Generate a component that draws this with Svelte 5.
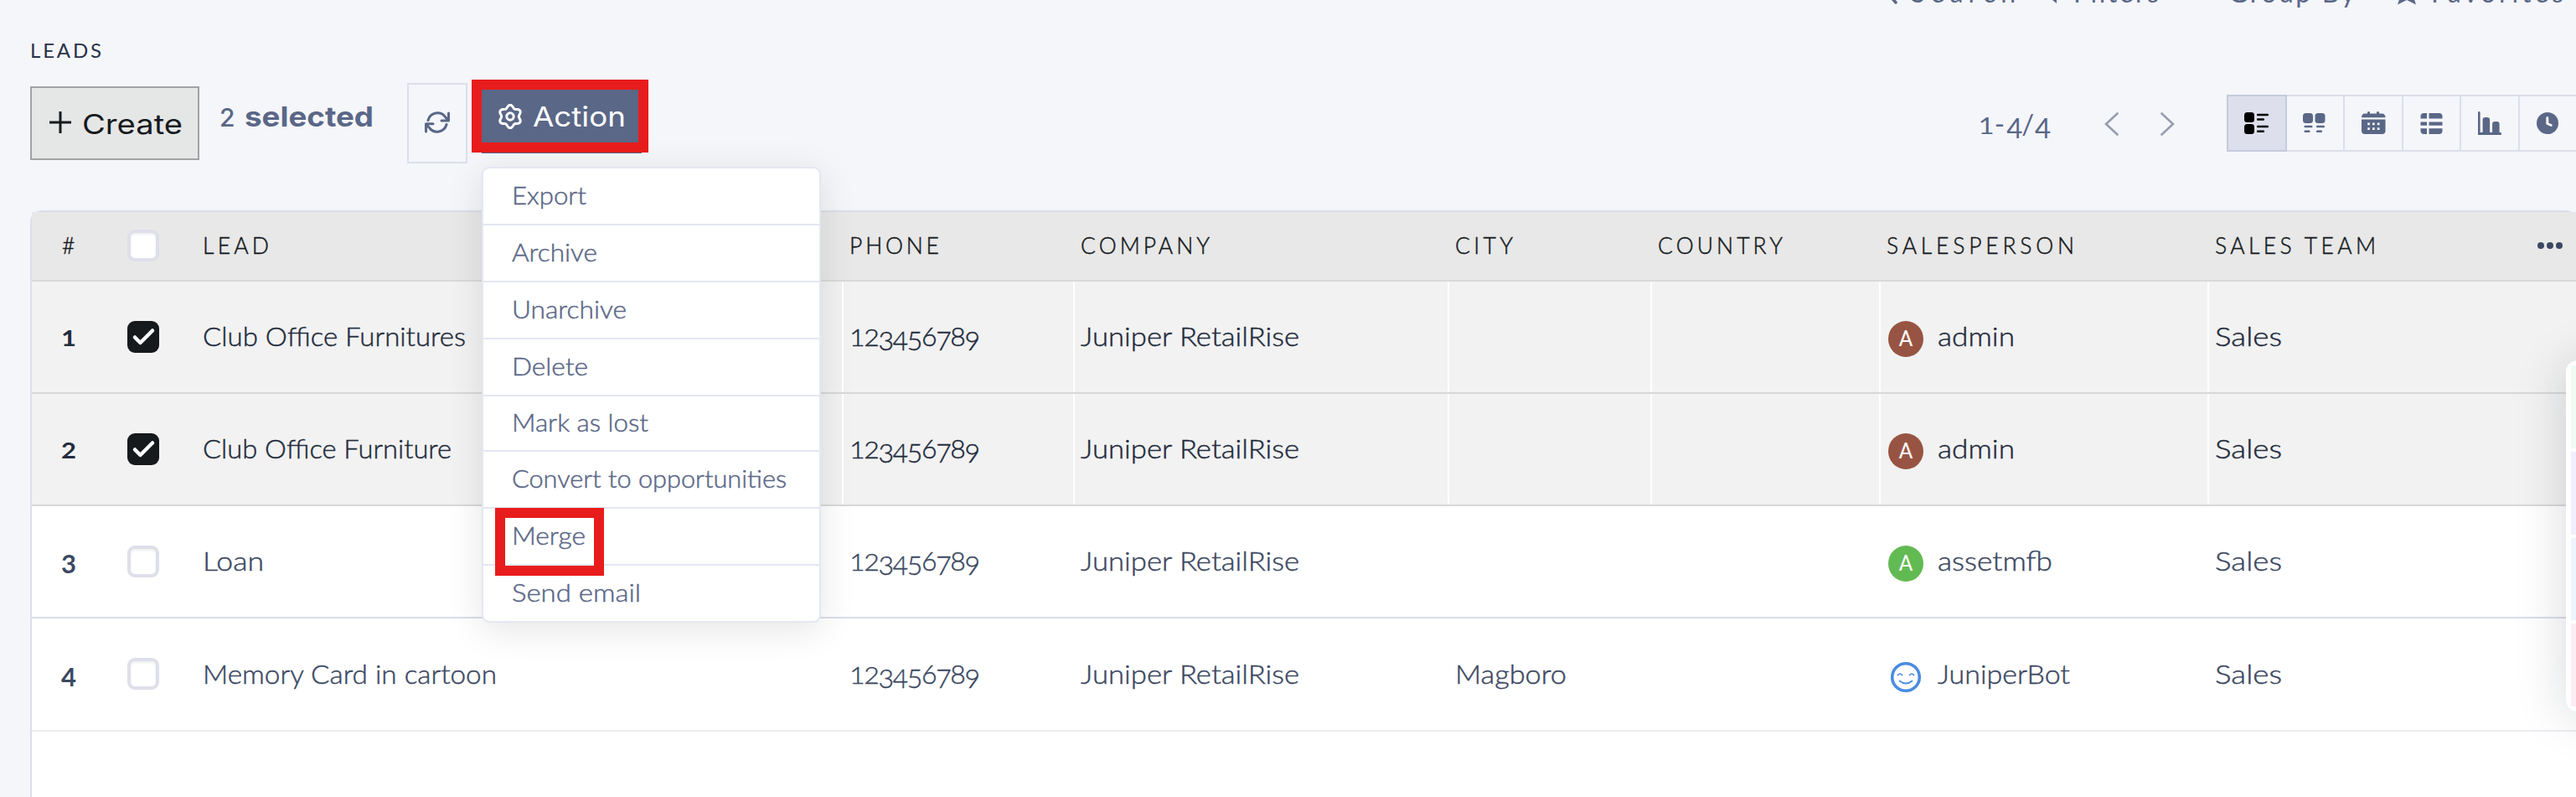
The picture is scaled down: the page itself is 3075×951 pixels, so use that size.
<script>
  const columns = [
    ['phone', 'PHONE', 106],
    ['company', 'COMPANY', 153],
    ['city', 'CITY', 68],
    ['country', 'COUNTRY', 148],
    ['person', 'SALESPERSON', 223],
    ['team', 'SALES TEAM', 191]
  ];

  const leads = [
    { name: 'Club Office Furnitures', w: 311, selected: true, city: '', person: 'admin', pw: 89, tone: 'brown' },
    { name: 'Club Office Furniture', w: 294, selected: true, city: '', person: 'admin', pw: 89, tone: 'brown' },
    { name: 'Loan', w: 70, selected: false, city: '', person: 'assetmfb', pw: 134, tone: 'green' },
    { name: 'Memory Card in cartoon', w: 348, selected: false, city: 'Magboro', person: 'JuniperBot', pw: 155, tone: 'bot' }
  ];

  const actions = [
    ['Export', 86], ['Archive', 99], ['Unarchive', 134], ['Delete', 88],
    ['Mark as lost', 160], ['Convert to opportunities', 325], ['Merge', 85], ['Send email', 151]
  ];

  function textWidth(node) {
    const range = document.createRange();
    range.selectNodeContents(node);
    return range.getBoundingClientRect().width;
  }

  // Tracks a label out (or in) so that it fills the given width.
  function track(node, width) {
    const count = node.textContent.length;
    node.style.letterSpacing = `${((width + 1 - textWidth(node)) / (count - 1)).toFixed(3)}px`;
  }

  // Widens the letterforms so that a label fills the given width.
  function widen(node, width) {
    node.style.transform = `scaleX(${((width + 3) / textWidth(node)).toFixed(4)})`;
  }

  // Old-style figures: 1 and 2 sit at x-height, 3 4 5 7 9 descend.
  const figure = (c) => ('012'.includes(c) ? 'small' : '34579'.includes(c) ? 'low' : '');

  const gear = Array.from({ length: 73 }, (_, i) => {
    const a = (i / 72) * Math.PI * 2;
    const r = 12 + 1.7 * Math.cos(6 * (a - Math.PI / 2));
    return `${i ? 'L' : 'M'}${(15 + r * Math.cos(a)).toFixed(2)} ${(15 + r * Math.sin(a)).toFixed(2)}`;
  }).join('') + 'Z';
</script>

{#snippet figures(text)}{#each text.split('') as c}<span class="fig {figure(c)}">{c}</span>{/each}{/snippet}

<div class="page">
  <header>
    <div class="search">
      <svg class="glass" width="24" height="32" viewBox="0 0 24 32"><path d="M15 20l7 8" /></svg>
      <span class="s1" use:track={124}>Search</span>
      <svg class="funnel" width="26" height="32" viewBox="0 0 26 32"><path d="M3 6h20l-8 11v12l-5-4v-8z" /></svg>
      <span class="s2" use:track={101}>Filters</span>
      <span class="s3" use:track={150}>Group By</span>
      <svg class="star" width="24" height="32" viewBox="0 0 24 32"><path d="M12 4l3.500 8h8l-4 8 3.500 10.500-11-5.500-11 5.500L4.500 20l-4-8h8z" /></svg>
      <span class="s4" use:track={157}>Favorites</span>
    </div>

    <div class="crumb"><span use:track={84}>LEADS</span></div>

    <div class="toolbar">
      <button class="create">
        <svg width="26" height="26" viewBox="0 0 26 26"><path d="M13 0v26M0 13h26" /></svg>
        <span use:widen={117}>Create</span>
      </button>
      <div class="selection"><span class="n">2</span><b use:widen={151}>selected</b></div>
      <button class="refresh" aria-label="Refresh">
        <svg width="30" height="26" viewBox="0 0 30 26">
          <path d="M4 10.500A11.600 11.600 0 0 1 24.500 6.500L28.500 11M28.500 2v9h-8.500M26 15.500A11.600 11.600 0 0 1 5.500 19.500L1.500 15M10 14.800H1.500V24" />
        </svg>
      </button>
      <button class="action">
        <svg width="30" height="30" viewBox="0 0 30 30"><path d={gear} /><circle cx="15" cy="15" r="4.200" /></svg>
        <span use:widen={108}>Action</span>
        <i class="mark"></i>
      </button>

      <div class="pager">
        <span class="count">{@render figures('1')}<span class="fig dash">-</span>{@render figures('4/4')}</span>
        <svg width="17" height="28" viewBox="0 0 17 28"><path d="M15.500 1.500L2 14l13.500 12.500" /></svg>
        <svg class="next" width="17" height="28" viewBox="0 0 17 28"><path d="M1.500 1.500L15 14 1.500 26.500" /></svg>
      </div>

      <div class="views">
        <button class="on" aria-label="List">
          <svg width="32" height="32" viewBox="0 0 32 32">
            <rect x="1" y="3" width="12" height="12" rx="3.500" /><rect x="1" y="17" width="12" height="12" rx="3.500" />
            <rect x="16" y="4.700" width="14" height="2.600" rx="1" /><rect x="16" y="10.200" width="9" height="2.600" rx="1" />
            <rect x="16" y="18.700" width="14" height="2.600" rx="1" /><rect x="16" y="24.500" width="9" height="2.600" rx="1" />
          </svg>
        </button>
        <button aria-label="Kanban">
          <svg width="32" height="32" viewBox="0 0 32 32">
            <rect x="2" y="4" width="12" height="12" rx="3.500" /><rect x="16.500" y="4" width="12" height="12" rx="3.500" />
            <rect x="3.500" y="18.700" width="10" height="2.500" rx="1" /><rect x="18" y="18.700" width="10" height="2.500" rx="1" />
            <rect x="3.500" y="24.500" width="7" height="2.500" rx="1" /><rect x="18" y="24.500" width="7" height="2.500" rx="1" />
          </svg>
        </button>
        <button aria-label="Calendar">
          <svg width="32" height="32" viewBox="0 0 32 32">
            <path d="M2 9.200Q2 4.500 6 4.500H9V3q0-1 1.500-1T12 3v1.500h8V3q0-1 1.500-1T23 3v1.500h3q4.500 0 4.500 4.700z" />
            <path fill-rule="evenodd" d="M2 11.500h28.500V25q0 4-4 4H6q-4 0-4-4zM9.200 15.500v2.700h2.700v-2.700zm5.800 0v2.700h2.700v-2.700zm5.800 0v2.700h2.700v-2.700zM9.200 21.300V24h2.700v-2.700zm5.800 0V24h2.700v-2.700zm5.800 0V24h2.700v-2.700z" />
          </svg>
        </button>
        <button aria-label="Pivot">
          <svg width="32" height="32" viewBox="0 0 32 32">
            <path d="M3.500 10.500V8q0-4 4-4H11v6.500zM13.500 4h12q4 0 4 4v2.500h-16zM3.500 14.500H11v4.300H3.500zM13.500 14.500h16v4.300h-16zM3.500 22.200H11V29H7.500q-4 0-4-4zM13.500 22.200h16V25q0 4-4 4h-12z" />
          </svg>
        </button>
        <button aria-label="Graph">
          <svg width="32" height="32" viewBox="0 0 32 32">
            <path d="M2 3.300q0-1.300 1.300-1.300t1.300 1.300V27h3V12q0-3 3-3h2.500q3 0 3 3v15h3V17q0-3 3-3h2.500q3 0 3 3v10h1q1.500 0 1.500 1.500T29 30H2z" />
          </svg>
        </button>
        <button aria-label="Activity">
          <svg width="32" height="32" viewBox="0 0 32 32"><circle cx="16" cy="16" r="13" /><path class="hand" d="M15.800 9.500v7l4.500 2" /></svg>
        </button>
      </div>
    </div>
  </header>

  <main>
    <div class="row head">
      <div class="num"><span>#</span></div>
      <div class="check"><i class="box"></i></div>
      <div class="lead"><span use:track={78}>LEAD</span></div>
      {#each columns as [key, label, w]}
        <div class="cell"><span use:track={w}>{label}</span></div>
      {/each}
      <div class="more"><i></i><i></i><i></i></div>
    </div>

    {#each leads as lead, i}
      <div class="row" class:selected={lead.selected} class:last={i === 3}>
        <div class="num"><b>{@render figures(String(i + 1))}</b></div>
        <div class="check">
          <i class="box" class:checked={lead.selected}>
            {#if lead.selected}<svg width="38" height="38" viewBox="0 0 38 38"><path d="M9 19.500l6.500 6.500L30 11.500" /></svg>{/if}
          </i>
        </div>
        <div class="lead"><span use:widen={lead.w}>{lead.name}</span></div>
        <div class="cell phone"><span>{@render figures('123456789')}</span></div>
        <div class="cell"><span use:widen={258}>Juniper RetailRise</span></div>
        <div class="cell">{#if lead.city}<span use:widen={130}>{lead.city}</span>{/if}</div>
        <div class="cell"></div>
        <div class="cell person">
          {#if lead.tone === 'bot'}
            <svg class="bot" width="42" height="42" viewBox="0 0 42 42">
              <circle cx="21" cy="21" r="16.300" />
              <path d="M11.500 18.500q2.500-3 5 0M25.500 18.500q2.500-3 5 0M13.500 25.500q7.500 6 15 0" />
            </svg>
          {:else}
            <i class="avatar {lead.tone}">A</i>
          {/if}
          <span use:widen={lead.pw}>{lead.person}</span>
        </div>
        <div class="cell"><span use:widen={77}>Sales</span></div>
      </div>
    {/each}
  </main>

  <div class="menu">
    {#each actions as [label, w]}
      <div class="item" class:short={label === 'Mark as lost'}><span use:widen={w}>{label}</span>{#if label === 'Merge'}<i class="mark"></i>{/if}</div>
    {/each}
  </div>

  <aside><i class="mint"></i><i class="violet"></i><i class="blue"></i><i class="pink"></i></aside>
</div>

<style>
  :global(body) { margin: 0; overflow: hidden; }
  .page { position: relative; box-sizing: border-box; width: 3075px; height: 951px; overflow: hidden; display: flex; flex-direction: column; background: #f5f6fa; color: #5a6787; font-family: Lato, 'Open Sans', sans-serif; font-size: 32px; }
  span, b { white-space: nowrap; display: inline-block; transform-origin: 0 50%; }
  button { box-sizing: border-box; margin: 0; padding: 0; background: none; border: 0; border-radius: 0; font: inherit; color: inherit; display: flex; }
  svg { display: block; flex: none; }

  header { height: 251px; flex: none; padding-left: 36px; }
  .search { height: 45px; display: flex; justify-content: flex-end; padding-right: 14px; line-height: 32px; }
  .search > * { margin-top: -25px; flex: none; }
  .search path { fill: #5a6787; }
  .glass path { stroke: #5a6787; stroke-width: 3.500; stroke-linecap: round; }
  .s1 { width: 127px; margin-left: 16px; }
  .funnel { margin-left: 32px; }
  .s2 { width: 103px; margin-left: 9px; }
  .s3 { width: 152px; margin-left: 82px; }
  .star { margin-left: 49px; }
  .s4 { width: 159px; margin-left: 17px; }

  .crumb { height: 30px; line-height: 30px; font-size: 24px; color: #283149; }
  .toolbar { display: flex; align-items: flex-start; font-size: 33px; line-height: 40px; }
  .create { margin-top: 28px; width: 202px; height: 88px; border: 2px solid #a0a2a4; background: #e5e7e6; color: #161a1d; padding: 25px 0 0 21px; font-family: Inter, sans-serif; }
  .create svg { margin: 3px 13px 0 0; }
  .create span { margin-top: -2px; }
  .create path { stroke: #161a1d; stroke-width: 3; }
  .selection { margin: 44px 0 0 25px; width: 223px; display: flex; font-family: Inter, sans-serif; }
  .selection .n { width: 29px; font-size: 30px; font-weight: 500; padding-top: 1px; margin-left: -1px; box-sizing: border-box; }
  .selection b { margin-left: 1px; }
  .refresh { margin-top: 24px; width: 72px; height: 96px; border: 2px solid #dcdeea; padding: 32px 0 0 19px; }
  .refresh path { fill: none; stroke: #5a6787; stroke-width: 3; stroke-linecap: round; stroke-linejoin: round; }
  .action { position: relative; margin: 23px 0 0 17px; width: 191px; height: 85px; background: #5a6787; color: #fff; padding: 21px 0 0 19px; font-family: Inter, sans-serif; }
  .action svg { margin: 5px 12px 0 0; }
  .action path, .action circle { fill: none; stroke: #fff; stroke-width: 3; stroke-linejoin: round; }
  .mark { position: absolute; box-sizing: border-box; border: 12px solid #e81c1c; }
  .action .mark { left: -12px; top: -3px; width: 211px; height: 87px; }

  .pager { margin: 52px 0 0 auto; display: flex; width: 296px; }
  .pager .count { width: 150px; font-size: 33px; }
  .pager .count .fig { width: 16.900px; }
  .pager svg { margin-top: 7px; }
  .pager path { fill: none; stroke: #959daf; stroke-width: 2.600; stroke-linecap: round; }
  .pager .next { margin-left: 50px; }
  .fig { display: inline-block; width: 17.200px; text-align: center; position: relative; }
  .fig.small { transform: scaleY(0.84); transform-origin: 50% 81%; }
  .fig.low { top: 5px; }

  .views { margin: 38px -2px 0 0; display: flex; border: solid #dcdeea; border-width: 2px 0; height: 68px; box-sizing: border-box; }
  .views button { width: 69.500px; height: 64px; border-right: 2px solid #dcdeea; align-items: center; justify-content: center; }
  .views .on { width: 72px; height: 68px; margin-top: -2px; background: #dedfec; border: 2px solid #c5cadc; }
  .views svg { fill: #5a6787; }
  .views .on svg { fill: #000; }
  .hand { fill: none; stroke: #f5f6fa; stroke-width: 3; stroke-linecap: round; stroke-linejoin: round; }

  main { flex: 1; margin-left: 36px; width: 3041px; box-sizing: border-box; border: 2px solid #dcdeea; border-bottom: 0; border-radius: 14px 14px 0 0; background: #fff; color: #3c4862; font-weight: 300; -webkit-text-stroke-width: 0.45px; }
  .row { display: grid; grid-template-columns: 114px 91px 762px 276px 447px 242px 273px 392px 1fr; height: 134px; box-sizing: border-box; border-bottom: 2px solid #dadde9; line-height: 40px; }
  .row > div { display: flex; align-items: center; padding-bottom: 3px; }
  .row.selected { background: #f2f2f2; color: #232c3d; border-color: #d8d8d8; }
  .row.last { height: 135px; border-color: #ecedf3; }
  .row.last > div { padding-bottom: 2px; }
  .row > .num { padding-left: 35px; }
  .num b { font-weight: 700; font-size: 31px; -webkit-text-stroke-width: 0; }
  .num .fig { width: 17px; }
  .num .fig.low { top: 3px; }
  .row > .check { padding-bottom: 0; }
  .lead span { margin-left: -1px; }
  .row > .cell { padding-left: 7px; border-left: 2px solid transparent; }
  .row.selected > .cell { border-color: #fff; }
  .row.head { height: 83px; grid-template-columns: 114px 91px 762px 276px 447px 242px 273px 392px 394px 1fr; background: #e8e8e8; border-color: #d9d9d9; color: #161a1d; font-size: 26.500px; }
  .row.head > div { padding-bottom: 1px; }
  .row.head > .num { padding-left: 36px; }
  .box { box-sizing: border-box; width: 38px; height: 38px; border: 4px solid #dedfea; border-radius: 9px; background: #fff; box-shadow: inset 0 2px 3px #0001; }
  .box.checked { border: 0; background: #161a1d; }
  .box path { fill: none; stroke: #fff; stroke-width: 4.500; stroke-linecap: round; stroke-linejoin: round; }
  .avatar { width: 42px; height: 43px; border-radius: 50%; color: #fff; font: 26px/43px Roboto, sans-serif; text-align: center; -webkit-text-stroke-width: 0; }
  .person .avatar, .person .bot { margin: 7px 17px 0 2px; }
  .person .bot { margin-top: 9px; }
  .brown { background: #985443; }
  .green { background: #62ba53; }
  .bot circle { fill: none; stroke: #4a8be3; stroke-width: 3.600; }
  .bot path { fill: none; stroke: #4a8be3; stroke-width: 1.700; stroke-linecap: round; }
  .more { gap: 3px; }
  .more i { width: 8px; height: 8px; border-radius: 50%; background: #3c4862; }

  .menu { position: absolute; left: 575px; top: 199px; width: 405px; height: 544px; box-sizing: border-box; border: 2px solid #e4e7f2; border-radius: 9px; background: #fff; box-shadow: 0 8px 44px rgba(0, 0, 0, 0.11); font-size: 28.500px; font-weight: 300; -webkit-text-stroke-width: 0.45px; }
  .item { position: relative; height: 68px; box-sizing: border-box; border-bottom: 2px solid #e4e7f2; padding-left: 34px; line-height: 64px; }
  .item.short { height: 66px; line-height: 62px; }
  .item:last-child { border: 0; }
  .item .mark { left: 14px; top: -1px; width: 130px; height: 81px; z-index: 1; }

  aside { position: absolute; left: 3063px; top: 430px; width: 80px; height: 419px; box-sizing: border-box; padding: 6px; display: flex; flex-direction: column; gap: 4px; border-radius: 14px; background: #fff; box-shadow: 0 4px 60px rgba(20, 24, 40, 0.17); }
  aside i { flex: 1; }
  .mint { background: #effbf5; }
  .violet { background: #f1effd; }
  .blue { background: #eef4fe; }
  .pink { background: #fdedf4; }
</style>
